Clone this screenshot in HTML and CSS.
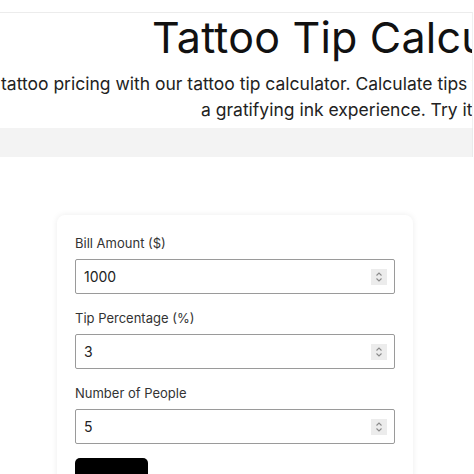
FILE: index.html
```html
<!DOCTYPE html>
<html>
<head>
<meta charset="utf-8">
<link rel="stylesheet" href="styles.css">
</head>
<body>
<div class="page">
  <header class="hero">
    <h1 class="title">Tattoo Tip Calculator</h1>
    <p class="desc">
      <span class="line l1">tattoo pricing with our tattoo tip calculator. Calculate tips for your artist</span>
      <span class="line l2">a gratifying ink experience. Try it now!</span>
    </p>
  </header>
  <div class="band"></div>
  <main class="main">
    <form class="card">
      <label class="label">Bill Amount ($)</label>
      <div class="field">
        <input class="input" type="text" value="1000">
        <span class="spin"><svg width="16" height="16" viewBox="0 0 16 16"><path d="M5.5 6.5 L8 4 L10.5 6.5 M5.5 9.5 L8 12 L10.5 9.5" fill="none" stroke="#8a8a8a" stroke-width="1.1"/></svg></span>
      </div>
      <label class="label">Tip Percentage (%)</label>
      <div class="field">
        <input class="input" type="text" value="3">
        <span class="spin"><svg width="16" height="16" viewBox="0 0 16 16"><path d="M5.5 6.5 L8 4 L10.5 6.5 M5.5 9.5 L8 12 L10.5 9.5" fill="none" stroke="#8a8a8a" stroke-width="1.1"/></svg></span>
      </div>
      <label class="label">Number of People</label>
      <div class="field">
        <input class="input" type="text" value="5">
        <span class="spin"><svg width="16" height="16" viewBox="0 0 16 16"><path d="M5.5 6.5 L8 4 L10.5 6.5 M5.5 9.5 L8 12 L10.5 9.5" fill="none" stroke="#8a8a8a" stroke-width="1.1"/></svg></span>
      </div>
      <button class="btn" type="button">Calculate</button>
    </form>
  </main>
</div>
</body>
</html>
```
FILE: styles.css
```css
html, body {
  margin: 0;
  padding: 0;
  background: #ffffff;
  overflow: hidden;
  height: 474px;
}
body {
  font-family: Inter, "Noto Sans", sans-serif;
  color: #1a1a1a;
}
.page {
  padding-top: 12px;
}
.hero {
  border-top: 1px solid #ececec;
  border-right: 1px solid #f0f0f0;
  width: 472px;
  height: 115px;
  overflow: hidden;
}
.title {
  margin: 0;
  padding-left: 152px;
  padding-top: 0;
  font-size: 43px;
  font-weight: 400;
  line-height: 48px;
  letter-spacing: 0.2px;
  white-space: nowrap;
  color: #111;
}
.desc {
  margin: 10px 0 0;
  font-size: 17.5px;
  line-height: 26px;
  color: #222;
}
.line {
  display: block;
  white-space: nowrap;
}
.l1 {
  padding-left: 1px;
}
.l2 {
  padding-left: 201px;
}
.band {
  height: 29px;
  width: 472px;
  background: #f3f3f3;
  border-right: 1px solid #eaeaea;
}
.main {
  padding-top: 58px;
  padding-left: 57px;
}
.card {
  width: 320px;
  padding: 18px 18px 40px;
  border-radius: 8px;
  background: #fff;
  box-shadow: 0 0 6px rgba(0,0,0,0.08);
  display: flex;
  flex-direction: column;
}
.label {
  font-size: 13px;
  line-height: 20px;
  color: #333;
  margin-bottom: 6px;
}
.field {
  height: 35px;
  box-sizing: border-box;
  border: 1px solid #9a9a9a;
  border-radius: 2px;
  display: flex;
  align-items: center;
  padding: 0 7px 0 8px;
  margin-bottom: 14px;
}
.input {
  flex: 1;
  border: none;
  outline: none;
  padding: 0;
  font-family: Inter, "Noto Sans", sans-serif;
  font-size: 14px;
  color: #222;
  background: transparent;
  min-width: 0;
}
.spin {
  width: 16px;
  height: 16px;
  background: #ececec;
  display: flex;
}
.btn {
  width: 73px;
  height: 50px;
  background: #000;
  color: #fff;
  border: none;
  border-radius: 5px;
  font-family: Inter, sans-serif;
  font-size: 14px;
  padding: 0;
}
```
